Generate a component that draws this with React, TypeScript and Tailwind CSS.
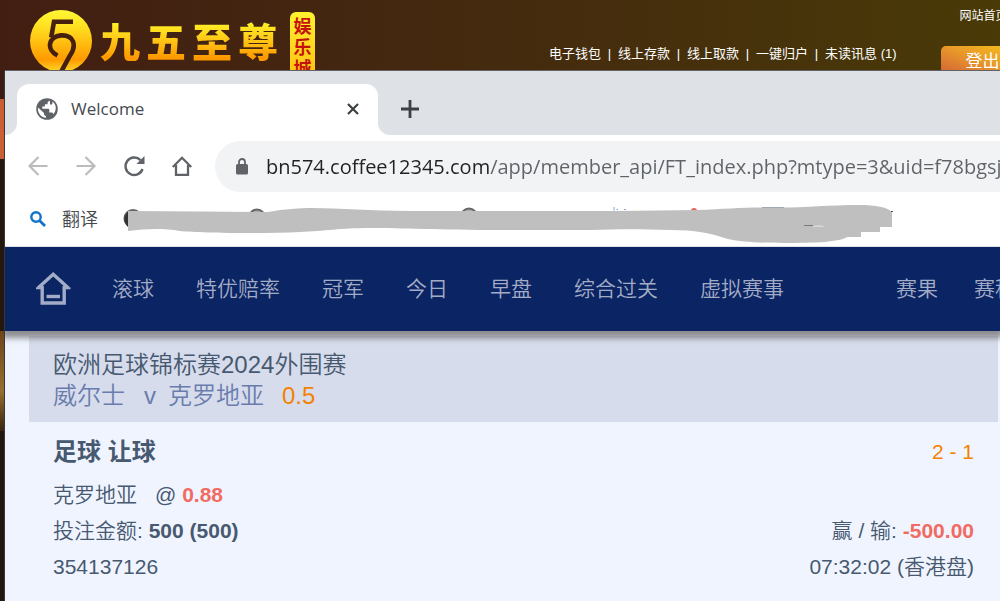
const accountLinks = ["电子钱包", "线上存款", "线上取款", "一键归户", "未读讯息 (1)"];

const sportLinks = ["滚球", "特优赔率", "冠军", "今日", "早盘", "综合过关", "虚拟赛事"];

const resultLinks = ["赛果", "赛程"];

function LogoMark() {
  return (
    <svg viewBox="0 0 64 64" className="size-16 shrink-0" aria-hidden="true">
      <defs>
        <linearGradient id="mark" x1="0" y1="0" x2="0" y2="1">
          <stop offset="0" stopColor="#fff835" />
          <stop offset="0.3" stopColor="#ffdc1e" />
          <stop offset="0.8" stopColor="#ff9a00" />
          <stop offset="1" stopColor="#ffd92a" />
        </linearGradient>
      </defs>
      <circle cx="32" cy="32" r="31" fill="url(#mark)" />
      <g fill="none" stroke="#45200f" strokeWidth="4.6">
        <path d="M44 12.7H25L22.2 28.5" />
        <path d="M28.5 46.5C17 41 19 27.5 32 26.4C45 25.8 48 36.5 41 46.5L32 63" />
      </g>
    </svg>
  );
}

function SiteHeader() {
  return (
    <header className="flex h-[70px] overflow-hidden bg-linear-to-r from-[#421e12] via-[#442a0e] to-[#493a07] font-['Liberation_Sans','Noto_Sans_CJK_SC',sans-serif] text-white">
      <a href="#home" className="flex shrink-0 pt-[9px] pl-[29px]">
        <LogoMark />
        <span className="ml-[7px] flex gap-[6px] font-['Noto_Sans_CJK_SC',sans-serif] text-[40px] leading-[62px] font-black">
          {"九五至尊".split("").map((char) => (
            <span
              key={char}
              className="bg-linear-to-b from-[#ffee25] from-25% to-[#ff9900] to-80% bg-clip-text text-transparent"
            >
              {char}
            </span>
          ))}
        </span>
        <span className="mt-[3px] ml-[12px] flex h-20 w-[25px] flex-col items-center rounded-md bg-linear-to-b from-[#fff22e] to-[#ffb400] pt-[3px] font-['Noto_Sans_CJK_SC',sans-serif] text-[18px] leading-[21px] font-bold text-[#c4130d]">
          <span>娱</span>
          <span>乐</span>
          <span>城</span>
        </span>
      </a>
      <nav className="ml-[234px] flex shrink-0 pt-[46px] text-[13px] leading-4">
        {accountLinks.map((label, index) => (
          <span key={label} className="flex">
            {index > 0 && <span className="w-[17px] text-center">|</span>}
            <a href="#account">{label}</a>
          </span>
        ))}
      </nav>
      <div className="ml-11 shrink-0">
        <a href="#index" className="block pt-2 pl-[19px] text-[12px] leading-4">
          网站首页
        </a>
        <button
          type="button"
          className="mt-[22px] h-8 w-[84px] rounded-[5px] bg-linear-to-tr from-[#cd5a35] via-[#e8962a] to-[#f8c70c] text-[17px] leading-8"
        >
          登出
        </button>
      </div>
    </header>
  );
}

function TabStrip() {
  return (
    <div>
      <div className="h-[13px] bg-[#dee1e6]" />
      <div className="flex h-[51px]">
        <div className="w-3 shrink-0 bg-white">
          <div className="h-full rounded-br-xl bg-[#dee1e6]" />
        </div>
        <div className="w-[361px] shrink-0 bg-linear-to-b from-[#dee1e6] from-50% to-white to-50%">
          <div className="flex h-full items-center rounded-t-xl bg-white pr-4 pb-[2px] pl-[18px]">
            <svg viewBox="0 0 24 24" className="size-6" aria-hidden="true">
              <circle cx="12" cy="12" r="10.8" fill="#5f6368" />
              <path
                fill="#fff"
                d="M14.5 3.4L12.6 5.3V7.2H9.9V9.6H7.3V11.8H13.2C14 11.8 14.3 12.4 14.3 13.4V15.5H16.4C17.5 15.5 18.2 16.1 18.4 17.3C20.7 14.8 21.4 11 20.2 8.1C19.6 6.5 18.6 5.3 17.4 4.5V6.2C17.4 7 16.9 7.5 16 7.5H15V5.4C15 4.6 14.9 4 14.5 3.4ZM3 10.4C2.2 15.3 5.7 20.2 11 20.8V18.9C9.8 18.9 9 18.1 9 17V16Z"
              />
            </svg>
            <span className="ml-3 text-[17px] text-[#45494d]">Welcome</span>
            <button type="button" aria-label="Close tab" className="ml-auto p-[3px]">
              <svg viewBox="0 0 12 12" className="size-3" stroke="#3c4043" strokeWidth="2.2">
                <path d="M1 1L11 11M11 1L1 11" />
              </svg>
            </button>
          </div>
        </div>
        <div className="flex min-w-0 flex-1 items-center rounded-bl-xl bg-[#dee1e6] pb-[2px] pl-[23px]">
          <button type="button" aria-label="New tab">
            <svg viewBox="0 0 18 18" className="size-[18px]" stroke="#3c4043" strokeWidth="2.8">
              <path d="M9 0V18M0 9H18" />
            </svg>
          </button>
        </div>
      </div>
    </div>
  );
}

function Toolbar() {
  return (
    <div className="flex h-[62px] items-center pl-[21px] text-[#5f6368]">
      <div className="flex shrink-0 gap-6">
        <button type="button" aria-label="Back" className="text-[#babcbe]">
          <svg viewBox="0 0 24 24" className="size-6" fill="none" stroke="currentColor" strokeWidth="2.2">
            <path d="M21.5 12H3.5M12.5 3L3.5 12L12.5 21" />
          </svg>
        </button>
        <button type="button" aria-label="Forward" className="text-[#babcbe]">
          <svg viewBox="0 0 24 24" className="size-6" fill="none" stroke="currentColor" strokeWidth="2.2">
            <path d="M2.5 12H20.5M11.5 3L20.5 12L11.5 21" />
          </svg>
        </button>
        <button type="button" aria-label="Reload">
          <svg viewBox="0 0 24 24" className="size-6" fill="none" stroke="currentColor" strokeWidth="2.4">
            <path d="M20.5 15A8.7 8.7 0 1 1 18.5 6.2" />
            <path d="M22.5 2V10H14.5Z" fill="currentColor" stroke="none" />
          </svg>
        </button>
        <button type="button" aria-label="Home">
          <svg viewBox="0 0 24 24" className="size-6" fill="none" stroke="currentColor" strokeWidth="2.3">
            <path d="M2.8 13L12 3.8L21.2 13M6 11V20.8H18V11" />
          </svg>
        </button>
      </div>
      <label className="ml-[21px] flex h-[51px] min-w-0 flex-1 items-center rounded-l-full bg-[#f1f3f4] pl-[21px]">
        <svg viewBox="0 0 12 17" className="h-[17px] w-3 shrink-0" aria-hidden="true">
          <rect y="6" width="12" height="10.5" rx="1.5" fill="#5f6368" />
          <path d="M3 7V4A3 3 0 0 1 9 4V7" fill="none" stroke="#5f6368" strokeWidth="1.8" />
        </svg>
        <input
          type="text"
          aria-label="Address"
          defaultValue="bn574.coffee12345.com/app/member_api/FT_index.php?mtype=3&uid=f78bgsj"
          className="ml-[18px] h-full min-w-0 flex-1 bg-linear-to-r from-[#202124] from-[224px] to-[#5f6368] to-[224px] bg-clip-text text-[20px] text-transparent outline-none"
        />
      </label>
    </div>
  );
}

function BookmarksBar() {
  return (
    <div className="flex h-[50px] overflow-hidden border-b border-[#dfe1e5]">
      <a href="#translate" className="flex h-[43px] shrink-0 items-center pl-6 text-[18px] text-[#45494d]">
        <svg viewBox="0 0 18 18" className="size-[18px]" fill="none" stroke="#1173c9" aria-hidden="true">
          <circle cx="7" cy="7" r="4.7" strokeWidth="2.4" />
          <path d="M10.5 10.5L16 16" strokeWidth="2.8" />
        </svg>
        <span className="ml-[15px] font-['Noto_Sans_CJK_SC',sans-serif] font-[350]">翻译</span>
      </a>
      <svg viewBox="120 197 780 49" className="ml-[22px] h-[49px] w-[780px] shrink-0" aria-hidden="true">
        <g fill="#aaa" stroke="#666" strokeWidth="2">
          <circle cx="133" cy="218.5" r="8.5" />
          <circle cx="257" cy="217.5" r="8" />
          <circle cx="469" cy="216.5" r="8" />
        </g>
        <path d="M129 211Q120 218 128 227Z" fill="#333" />
        <path d="M614 207V210.5M616.5 209.5H618M624 209.5H626" stroke="#86a8d0" fill="none" />
        <circle cx="694" cy="211" r="3" fill="#e8635a" />
        <path d="M762 207.5H784" stroke="#8290aa" />
        <path
          fill="#bfbfbf"
          d="M128 211L200 211.5L268 212C285 209 300 208 312 208C340 208 370 211 410 211H617L698 210C725 209 745 207 770 207.5C805 208 825 205 860 205C875 205 887 207 892 212V227H880V232H861V237H847C840 242 815 243 785 243C760 243 742 242 728 239C710 233 695 230 670 230C640 229 620 229 590 230H500C440 230 400 228 370 228C340 228 325 231 300 232C260 234 200 233 180 231C162 228 145 229 128 231Z"
        />
        <path d="M804 225.5H813" stroke="#747980" />
        <path d="M813 226Q820 225 825 226.5H813" fill="#efefef" />
        <path d="M891 211.5H893" stroke="#33506e" />
      </svg>
    </div>
  );
}

function SportsNav() {
  return (
    <nav className="relative flex h-[84px] shrink-0 items-center bg-[#0b2463] pl-[31px] text-[21px] whitespace-nowrap text-[#a3acc6] shadow-[0_4px_6px_3px_rgba(85,85,85,0.65)]">
      <a href="#home" aria-label="首页" className="shrink-0">
        <svg viewBox="0 0 35 34" className="h-[34px] w-[35px]" fill="none" stroke="#a3acc6" strokeWidth="3.4">
          <path d="M0 16.2H6.5M34.5 16.2H28.5" strokeWidth="2" />
          <path d="M2 16L17.2 2.3L32.4 16" />
          <path d="M6.2 14V31H28.2V14" />
          <path d="M10.5 24.5H24" />
        </svg>
      </a>
      <ul className="ml-[41px] flex shrink-0 gap-[42px] font-[350]">
        {sportLinks.map((label) => (
          <li key={label}>
            <a href="#sport">{label}</a>
          </li>
        ))}
      </ul>
      <ul className="ml-28 flex shrink-0 gap-9 font-[350]">
        {resultLinks.map((label) => (
          <li key={label}>
            <a href="#result">{label}</a>
          </li>
        ))}
      </ul>
    </nav>
  );
}

function BetRecord() {
  return (
    <main className="flex-1 bg-[#f0f4ff] pt-[5px] pr-[2px] pl-6 text-[#475970]">
      <div className="bg-[#d6dceb] px-6 pt-[13px] pb-[11px] text-[24px] leading-[31px]">
        <h1 className="font-[350]">欧洲足球锦标赛2024外围赛</h1>
        <p className="flex font-[350] text-[#6a7cad]">
          <span>威尔士</span>
          <span className="ml-[19px]">v</span>
          <span className="ml-3">克罗地亚</span>
          <span className="ml-[18px] text-[#f38200]">0.5</span>
        </p>
      </div>
      <div className="px-6 pt-3 text-[21px] leading-9 font-[350]">
        <div className="mb-[7px] flex justify-between">
          <h2 className="text-[24px] font-bold">足球 让球</h2>
          <span className="text-[#f38200]">2 - 1</span>
        </div>
        <p>
          克罗地亚
          <span className="ml-[18px]">@</span> <b className="font-bold text-[#f06b62]">0.88</b>
        </p>
        <div className="flex justify-between">
          <p>
            投注金额: <b className="font-bold">500 (500)</b>
          </p>
          <p>
            赢 / 输: <b className="font-bold text-[#f06b62]">-500.00</b>
          </p>
        </div>
        <div className="flex justify-between">
          <p>354137126</p>
          <p>07:32:02 (香港盘)</p>
        </div>
      </div>
    </main>
  );
}

export default function App() {
  return (
    <div className="flex min-h-screen flex-col overflow-hidden bg-[#241813]">
      <SiteHeader />
      <div className="flex flex-1">
        <div className="flex w-[5px] shrink-0 flex-col border-r border-[#3b3438] bg-[#211710]">
          <div className="h-[29px] bg-[#3c1b12]" />
          <div className="h-[60px] bg-[#c95f32]" />
          <div className="h-[172px] bg-[#24170f]" />
          <div className="h-[100px] bg-linear-to-b from-[#6d441a] via-[#94712f] via-60% to-[#3b2411]" />
        </div>
        <div className="flex min-w-0 flex-1 flex-col overflow-hidden border-t border-[#626266] bg-white">
          <div className="font-['Open_Sans','Noto_Sans_CJK_SC',sans-serif]">
            <TabStrip />
            <Toolbar />
            <BookmarksBar />
          </div>
          <div className="flex flex-1 flex-col overflow-hidden font-['Liberation_Sans','Noto_Sans_CJK_SC',sans-serif]">
            <SportsNav />
            <BetRecord />
          </div>
        </div>
      </div>
    </div>
  );
}
